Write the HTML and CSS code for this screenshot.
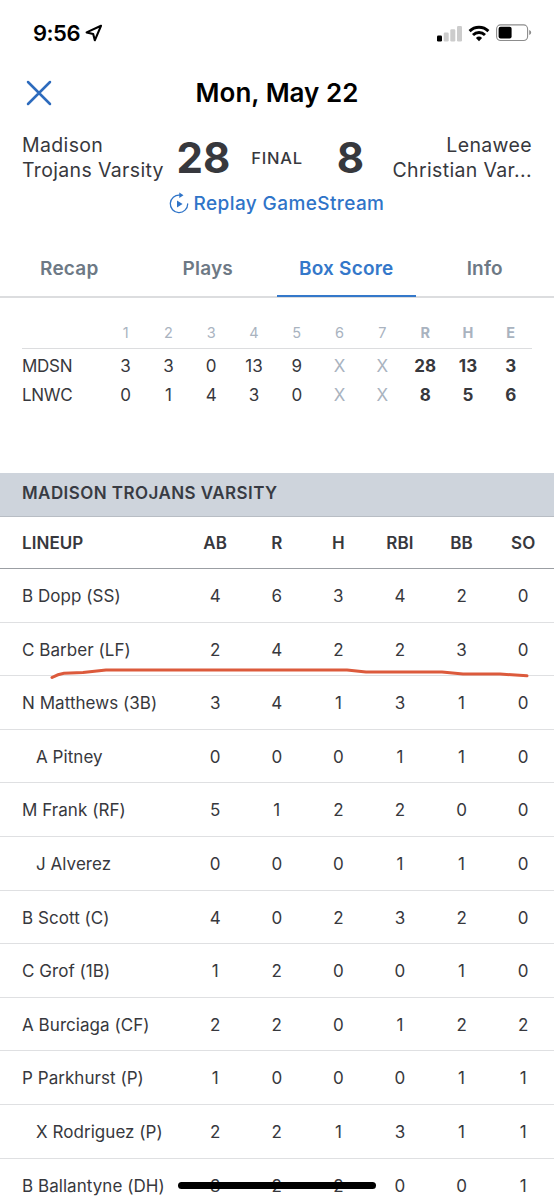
FILE: index.html
```html
<!DOCTYPE html>
<html lang="en">
<head>
  <meta charset="UTF-8">
  <meta name="viewport" content="width=device-width, initial-scale=1.0">
  <title>Mon, May 22 - Box Score</title>
  <link rel="stylesheet" href="styles.css">
</head>
<body>
  <!-- Status bar -->
  <div class="status-bar">
    <div class="status-left">
      <span class="time">9:56</span>
      <svg class="location" viewBox="0 0 18 18">
        <path d="M16 1.8 1.6 8.4l6.6 1.5 1.6 6.4z" fill="none" stroke="#000" stroke-width="2.1" stroke-linejoin="round" />
      </svg>
    </div>
    <div class="status-right">
      <svg class="signal" viewBox="0 0 26 17">
        <rect x="0" y="10.5" width="5" height="6" rx="1.2" fill="#000" />
        <rect x="6.7" y="7.5" width="5" height="9" rx="1.2" fill="#ccc" />
        <rect x="13.3" y="4.3" width="5" height="12.2" rx="1.2" fill="#ccc" />
        <rect x="20" y="1" width="5" height="15.5" rx="1.2" fill="#ccc" />
      </svg>
      <svg class="wifi" viewBox="0 0 22 17">
        <path d="M1.6 6.1a13.4 13.4 0 0 1 18.8 0M5 10a8.6 8.6 0 0 1 12 0" fill="none" stroke="#000" stroke-width="2.9" />
        <path d="M7.9 13a4.6 4.6 0 0 1 6.2 0L11 16.3z" />
      </svg>
      <svg class="battery" viewBox="0 0 36 18">
        <rect x=".6" y=".9" width="31" height="15.6" rx="4" fill="#fff" stroke="#8c8c8c" stroke-width="1.1" />
        <rect x="2.6" y="2.8" width="13" height="11.8" rx="2" />
        <path d="M33.2 6.1v5q2-.7 2-2.5t-2-2.5z" fill="#8c8c8c" />
      </svg>
    </div>
  </div>

  <!-- Title -->
  <header class="title-bar">
    <svg class="close" viewBox="0 0 26 26">
      <path d="M2 2l22 22M24 2 2 24" fill="none" stroke="#2d6bbd" stroke-width="2.5" stroke-linecap="round" />
    </svg>
    <h1>Mon, May 22</h1>
  </header>

  <!-- Score -->
  <section class="score">
    <div class="team">Madison<br>Trojans Varsity</div>
    <div class="points">28</div>
    <div class="state">FINAL</div>
    <div class="points">8</div>
    <div class="team away">Lenawee<br>Christian Var...</div>
  </section>

  <a class="replay">
    <svg viewBox="0 0 20 22">
      <path d="M10.8 3.2A8.7 8.7 0 1 0 18.7 11.9" fill="none" stroke="#2f74c8" stroke-width="1.3" stroke-linecap="round" />
      <path d="M10.3 .4l4.2 2.8-4.2 2.8zM8 8.6l5.6 3.4L8 15.4z" fill="#2f74c8" />
    </svg>
    <span>Replay GameStream</span>
  </a>

  <!-- Tabs -->
  <nav class="tabs">
    <a class="tab">Recap</a>
    <a class="tab">Plays</a>
    <a class="tab active">Box Score</a>
    <a class="tab">Info</a>
  </nav>

  <!-- Line score -->
  <div class="linescore">
    <div class="line head">
      <span></span><span>1</span><span>2</span><span>3</span><span>4</span><span>5</span><span>6</span><span>7</span><b>R</b><b>H</b><b>E</b>
    </div>
    <div class="line">
      <span>MDSN</span><span>3</span><span>3</span><span>0</span><span>13</span><span>9</span><span class="off">X</span><span class="off">X</span><b>28</b><b>13</b><b>3</b>
    </div>
    <div class="line">
      <span>LNWC</span><span>0</span><span>1</span><span>4</span><span>3</span><span>0</span><span class="off">X</span><span class="off">X</span><b>8</b><b>5</b><b>6</b>
    </div>
  </div>

  <!-- Lineup -->
  <h2 class="band">MADISON TROJANS VARSITY</h2>
  <div class="lineup">
    <div class="row head"><span>LINEUP</span><span>AB</span><span>R</span><span>H</span><span>RBI</span><span>BB</span><span>SO</span></div>
    <div class="row"><span>B Dopp (SS)</span><span>4</span><span>6</span><span>3</span><span>4</span><span>2</span><span>0</span></div>
    <div class="row marked">
      <span>C Barber (LF)</span><span>2</span><span>4</span><span>2</span><span>2</span><span>3</span><span>0</span>
      <svg class="underline" viewBox="0 0 480 14">
        <path d="M2 9.5Q8 6 14 5.2L33 4.6 56 2H297L316 4H392L413 6H450L477 7.8" fill="none" stroke="#dc5a3c" stroke-width="3" stroke-linecap="round" stroke-linejoin="round" />
      </svg>
    </div>
    <div class="row"><span>N Matthews (3B)</span><span>3</span><span>4</span><span>1</span><span>3</span><span>1</span><span>0</span></div>
    <div class="row sub"><span>A Pitney</span><span>0</span><span>0</span><span>0</span><span>1</span><span>1</span><span>0</span></div>
    <div class="row"><span>M Frank (RF)</span><span>5</span><span>1</span><span>2</span><span>2</span><span>0</span><span>0</span></div>
    <div class="row sub"><span>J Alverez</span><span>0</span><span>0</span><span>0</span><span>1</span><span>1</span><span>0</span></div>
    <div class="row"><span>B Scott (C)</span><span>4</span><span>0</span><span>2</span><span>3</span><span>2</span><span>0</span></div>
    <div class="row"><span>C Grof (1B)</span><span>1</span><span>2</span><span>0</span><span>0</span><span>1</span><span>0</span></div>
    <div class="row"><span>A Burciaga (CF)</span><span>2</span><span>2</span><span>0</span><span>1</span><span>2</span><span>2</span></div>
    <div class="row"><span>P Parkhurst (P)</span><span>1</span><span>0</span><span>0</span><span>0</span><span>1</span><span>1</span></div>
    <div class="row sub"><span>X Rodriguez (P)</span><span>2</span><span>2</span><span>1</span><span>3</span><span>1</span><span>1</span></div>
    <div class="row"><span>B Ballantyne (DH)</span><span>3</span><span>2</span><span>2</span><span>0</span><span>0</span><span>1</span></div>
  </div>

  <div class="home-indicator"></div>
</body>
</html>
```
FILE: styles.css
```css
* {
  margin: 0;
  padding: 0;
  box-sizing: border-box;
}

html, body {
  height: 100%;
  overflow: hidden;
}

body {
  position: relative;
  font-family: 'Inter', sans-serif;
  background-color: #fff;
  color: #37383d;
}

svg {
  display: block;
}

/* Status bar */
.status-bar {
  display: flex;
  justify-content: space-between;
  align-items: center;
  height: 66px;
  padding: 0 22px 0 33px;
}

.status-left, .status-right {
  display: flex;
  align-items: center;
}

.time {
  font-size: 22px;
  font-weight: 600;
  letter-spacing: -0.5px;
  color: #000;
}

.location {
  width: 18px;
  height: 18px;
  margin-left: 5px;
}

.signal {
  width: 26px;
  height: 17px;
}

.wifi {
  width: 22px;
  height: 17px;
  margin: 0 6px 0 5px;
}

.battery {
  width: 36px;
  height: 18px;
}

/* Title */
.title-bar {
  display: grid;
  grid-template-columns: 60px 1fr 60px;
  align-items: center;
  height: 54px;
  padding: 0 26px;
}

.close {
  width: 26px;
  height: 26px;
}

.title-bar h1 {
  font-size: 26px;
  font-weight: 600;
  line-height: 32px;
  text-align: center;
  color: #000;
}

/* Score */
.score {
  display: grid;
  grid-template-columns: 145px 73px 74px 73px 145px;
  align-items: center;
  height: 75px;
  padding: 0 22px;
}

.team {
  font-size: 19.5px;
  line-height: 25px;
  letter-spacing: 0.35px;
  white-space: nowrap;
}

.away {
  text-align: right;
}

.points {
  font-size: 42px;
  font-weight: 700;
  line-height: 50px;
  text-align: center;
}

.state {
  font-size: 16.5px;
  font-weight: 500;
  letter-spacing: 0.8px;
  text-align: center;
}

.replay {
  display: flex;
  justify-content: center;
  align-items: center;
  gap: 5px;
  height: 16px;
  padding-right: 1px;
  font-size: 19px;
  font-weight: 500;
  letter-spacing: 0.4px;
  color: #2f74c8;
}

.replay svg {
  width: 20px;
  height: 22px;
}

/* Tabs */
.tabs {
  display: grid;
  grid-template-columns: repeat(4, 1fr);
  height: 60px;
  margin-top: 27px;
  border-bottom: 2px solid #dcdddf;
}

.tab {
  height: 59px;
  font-size: 19px;
  font-weight: 600;
  line-height: 61px;
  letter-spacing: 0.2px;
  text-align: center;
  color: #6d7985;
}

.tab.active {
  color: #3478ca;
  border-bottom: 2px solid #3478ca;
}

/* Line score */
.linescore {
  height: 175px;
  padding: 20px 22px 0;
}

.line {
  display: grid;
  grid-template-columns: 82.2px repeat(10, 42.8px);
  font-size: 17px;
  line-height: 29.5px;
  text-align: center;
}

.line span:first-child {
  text-align: left;
  letter-spacing: -0.3px;
}

.line b {
  font-weight: 700;
}

.line.head {
  height: 31px;
  margin-bottom: 2.6px;
  font-size: 14.5px;
  color: #a9b3bf;
  border-bottom: 1px solid #dcdddf;
}

.off {
  color: #a9b3bf;
}

/* Lineup */
.band {
  height: 43.5px;
  padding-left: 22px;
  font-size: 17px;
  font-weight: 600;
  line-height: 41px;
  letter-spacing: 0.43px;
  color: #383b43;
  background-color: #ced4dc;
  border-bottom: 1px solid #b8bdc4;
}

.row {
  position: relative;
  display: grid;
  grid-template-columns: 162.4px repeat(6, 61.6px);
  height: 53.6px;
  padding-left: 22px;
  font-size: 17px;
  line-height: 55px;
  text-align: center;
  border-bottom: 1px solid #dfe0e2;
}

.row span:first-child {
  text-align: left;
  white-space: nowrap;
  letter-spacing: 0.05px;
}

.row.head {
  height: 52.5px;
  font-weight: 600;
  line-height: 53px;
  letter-spacing: 0.2px;
  border-bottom-color: #9b9ea3;
}

.row.sub span:first-child {
  padding-left: 14px;
}

/* Hand drawn marker */
.underline {
  position: absolute;
  left: 50px;
  top: 45px;
  width: 480px;
  height: 14px;
  z-index: 1;
}

.home-indicator {
  position: absolute;
  left: 178px;
  bottom: 11px;
  width: 198px;
  height: 7px;
  border-radius: 4px;
  background-color: #000;
}
```
